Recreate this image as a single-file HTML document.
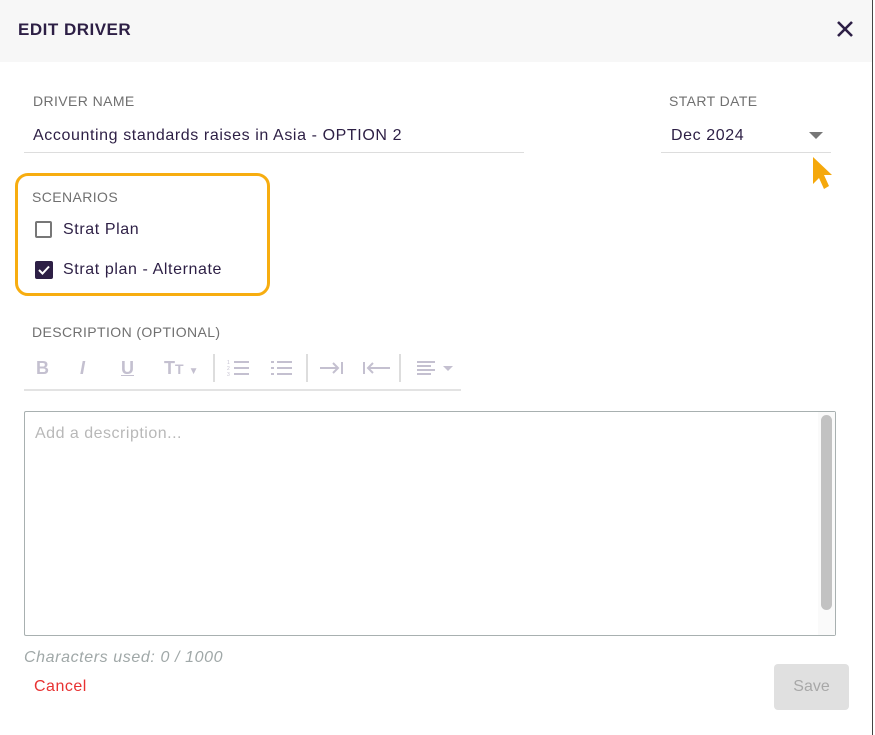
<!DOCTYPE html>
<html><head><style>
*{box-sizing:border-box;margin:0;padding:0}
body{width:875px;height:735px;background:#fff;font-family:"Liberation Sans",sans-serif;position:relative;overflow:hidden}
.abs{position:absolute}
.hdr{left:0;top:0;width:872px;height:62px;background:#f7f7f7}
.lbl{color:#707070;font-size:14px;letter-spacing:0.4px}
.val{color:#2d1f45;font-size:16px;letter-spacing:0.6px}
.tb{color:#c4c0d0;font-size:18px;font-weight:bold}
</style></head><body>
<div class="abs hdr"></div>
<div class="abs" style="left:872px;top:0;width:1px;height:735px;background:#444"></div>
<div class="abs" style="left:18px;top:20px;font-size:17px;font-weight:bold;color:#2d1f45;letter-spacing:0.5px">EDIT DRIVER</div>
<svg class="abs" style="left:836px;top:20px" width="18" height="18" viewBox="0 0 18 18"><path d="M2 2L16 16M16 2L2 16" stroke="#2d1f45" stroke-width="2.6"/></svg>

<div class="abs lbl" style="left:33px;top:93px">DRIVER NAME</div>
<div class="abs val" style="left:33px;top:127px">Accounting standards raises in Asia - OPTION 2</div>
<div class="abs" style="left:24px;top:152px;width:500px;height:1px;background:#ddd"></div>

<div class="abs lbl" style="left:669px;top:93px">START DATE</div>
<div class="abs val" style="left:671px;top:127px">Dec 2024</div>
<svg class="abs" style="left:809px;top:132px" width="14" height="7"><path d="M0 0H14L7 7Z" fill="#777"/></svg>
<div class="abs" style="left:661px;top:152px;width:170px;height:1px;background:#ddd"></div>
<svg class="abs" style="left:811px;top:156px" width="24" height="36" viewBox="0 0 24 36"><path d="M2 1L21 19L13 19L18 30L13 33L8 22L2 28Z" fill="#f5a80b"/></svg>

<div class="abs" style="left:15px;top:173px;width:255px;height:123px;border:3px solid #f7ad10;border-radius:13px"></div>
<div class="abs lbl" style="left:32px;top:189px">SCENARIOS</div>
<div class="abs" style="left:35px;top:221px;width:17px;height:17px;border:2px solid #777;border-radius:2px"></div>
<div class="abs val" style="left:63px;top:221px">Strat Plan</div>
<div class="abs" style="left:35px;top:261px;width:18px;height:18px;background:#2d1f45;border-radius:2px"></div>
<svg class="abs" style="left:35px;top:261px" width="18" height="18"><path d="M4 9L7.5 12.5L14 5.5" stroke="#fff" stroke-width="2" fill="none"/></svg>
<div class="abs val" style="left:63px;top:261px">Strat plan - Alternate</div>

<div class="abs lbl" style="left:32px;top:324px">DESCRIPTION (OPTIONAL)</div>
<div class="abs tb" style="left:36px;top:358px">B</div>
<div class="abs tb" style="left:80px;top:358px;font-style:italic">I</div>
<div class="abs tb" style="left:121px;top:358px;text-decoration:underline">U</div>
<div class="abs tb" style="left:164px;top:358px">T<span style="font-size:14px">T</span> <span style="font-size:10px">▼</span></div>
<div class="abs" style="left:213px;top:354px;width:2px;height:28px;background:#ddd"></div>
<svg class="abs" style="left:227px;top:359px" width="22" height="18"><g stroke="#c4c0d0" stroke-width="2"><path d="M7 3H22M7 9H22M7 15H22"/></g><g fill="#c4c0d0" font-size="5"><text x="0" y="5">1</text><text x="0" y="11">2</text><text x="0" y="17">3</text></g></svg>
<svg class="abs" style="left:270px;top:359px" width="22" height="18"><g stroke="#c4c0d0" stroke-width="2"><path d="M7 3H22M7 9H22M7 15H22M1 3H4M1 9H4M1 15H4"/></g></svg>
<div class="abs" style="left:306px;top:354px;width:2px;height:28px;background:#ddd"></div>
<svg class="abs" style="left:320px;top:359px" width="24" height="18"><g stroke="#c4c0d0" stroke-width="2" fill="none"><path d="M0 9H18M13 4L18 9L13 14M22 3V15"/></g></svg>
<svg class="abs" style="left:362px;top:359px" width="28" height="18"><g stroke="#c4c0d0" stroke-width="2" fill="none"><path d="M2 3V15M6 9H28M11 4L6 9L11 14"/></g></svg>
<div class="abs" style="left:399px;top:354px;width:2px;height:28px;background:#ddd"></div>
<svg class="abs" style="left:416px;top:359px" width="40" height="18"><g stroke="#c4c0d0" stroke-width="2"><path d="M1 3H19M1 7H15M1 11H19M1 15H15"/></g><path d="M27 7H37L32 12Z" fill="#c4c0d0"/></svg>
<div class="abs" style="left:24px;top:389px;width:437px;height:2px;background:#e3e3e3"></div>

<div class="abs" style="left:24px;top:411px;width:812px;height:225px;border:1px solid #a8b0b0;border-radius:2px"></div>
<div class="abs" style="left:818px;top:412px;width:17px;height:223px;background:#fafafa"></div>
<div class="abs" style="left:821px;top:415px;width:11px;height:195px;background:#c2c2c2;border-radius:6px"></div>
<div class="abs" style="left:35px;top:425px;font-size:16px;color:#b8b8b8;letter-spacing:0.5px">Add a description...</div>

<div class="abs" style="left:24px;top:649px;font-size:16px;color:#a0a8a8;font-style:italic;letter-spacing:0.6px">Characters used: 0 / 1000</div>
<div class="abs" style="left:34px;top:678px;font-size:16px;color:#e83232;letter-spacing:0.5px">Cancel</div>
<div class="abs" style="left:774px;top:664px;width:75px;height:46px;background:#e0e0e0;border-radius:4px;color:#a8a8a8;font-size:16px;text-align:center;line-height:46px">Save</div>
</body></html>
